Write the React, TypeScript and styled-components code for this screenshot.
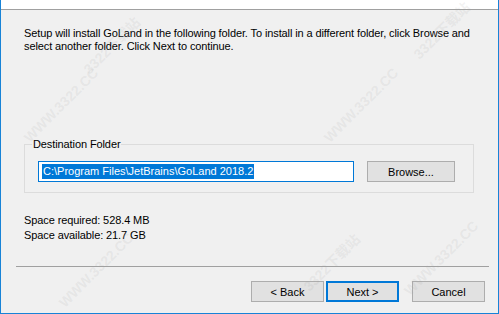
import styled, { createGlobalStyle } from "styled-components";

const GlobalStyle = createGlobalStyle`
  html, body {
    margin: 0;
    padding: 0;
    background: #f0f0f0;
  }
  * {
    box-sizing: border-box;
  }
`;

const Window = styled.div`
  position: relative;
  width: 499px;
  height: 314px;
  display: flex;
  flex-direction: column;
  background: #f0f0f0;
  border-left: 1px solid #1883d7;
  border-right: 1px solid #1883d7;
  border-bottom: 1px solid #1883d7;
  font-family: "Liberation Sans", Arial, sans-serif;
  font-size: 11px;
  color: #000;
  overflow: hidden;
`;

const Header = styled.div`
  height: 10px;
  background: #fff;
  border-bottom: 1px solid #a0a0a0;
`;

const Content = styled.div`
  padding: 0 0 0 23px;
`;

const Intro = styled.p`
  margin: 17px 0 0;
  line-height: 13px;
  letter-spacing: -0.11px;
  white-space: nowrap;
`;

const GroupBox = styled.fieldset`
  width: 450px;
  margin: 85px 0 0;
  padding: 10px 0 10px 0;
  border: 1px solid #dcdcdc;
  min-width: 0;
`;

const Legend = styled.legend`
  margin-left: 7px;
  padding: 0 1px;
  line-height: 13px;
  letter-spacing: -0.1px;
`;

const PathRow = styled.div`
  display: flex;
  align-items: center;
  gap: 13px;
  margin-left: 13px;
`;

const PathField = styled.div`
  width: 316px;
  height: 21px;
  background: #fff;
  border: 1px solid #0078d7;
  padding: 2px 3px;
  display: flex;
  align-items: center;
`;

const Selected = styled.span`
  background: #0078d7;
  color: #fff;
  line-height: 15px;
  padding: 0 1px;
  white-space: nowrap;
`;

const Button = styled.button<{ $focused?: boolean; $width?: number }>`
  width: ${(p) => p.$width ?? 73}px;
  height: 21px;
  padding: 0;
  margin: 0;
  background: #e1e1e1;
  border: ${(p) => (p.$focused ? "2px solid #0078d7" : "1px solid #adadad")};
  font-family: "Liberation Sans", Arial, sans-serif;
  font-size: 11px;
  color: #000;
`;

const SpaceInfo = styled.div`
  margin-top: 21px;
  display: flex;
  flex-direction: column;
  gap: 2px;
  line-height: 13px;
  letter-spacing: -0.1px;
`;

const Footer = styled.div`
  margin-top: auto;
  padding: 0 9px 0 15px;
`;

const Separator = styled.div`
  height: 1px;
  background: #a0a0a0;
`;

const ButtonRow = styled.div`
  display: flex;
  justify-content: flex-end;
  padding: 14px 4px 11px 0;
  gap: 2px;
`;

const CancelGap = styled.div`
  width: 9px;
`;

const Watermark = styled.span<{ $x: number; $y: number }>`
  position: absolute;
  left: ${(p) => p.$x}px;
  top: ${(p) => p.$y}px;
  transform: translate(-50%, -50%) rotate(-45deg);
  font-family: "Liberation Sans", "Noto Sans CJK SC", sans-serif;
  font-weight: bold;
  font-size: 14px;
  color: rgba(160, 160, 160, 0.14);
  white-space: nowrap;
  pointer-events: none;
`;

const marks = [
  { text: "3322下载站", x: 110, y: 45 },
  { text: "WWW.3322.CC", x: 60, y: 105 },
  { text: "3322下载站", x: 440, y: 30 },
  { text: "WWW.3322.CC", x: 360, y: 105 },
  { text: "3322下载站", x: 330, y: 262 },
  { text: "WWW.3322.CC", x: 440, y: 258 },
  { text: "WWW.3322.CC", x: 95, y: 270 },
];

export default function App() {
  return (
    <>
      <GlobalStyle />
      <Window>
        <Header />
        <Content>
          <Intro>
            Setup will install GoLand in the following folder. To install in a
            different folder, click Browse and
            <br />
            select another folder. Click Next to continue.
          </Intro>
          <GroupBox>
            <Legend>Destination Folder</Legend>
            <PathRow>
              <PathField>
                <Selected>C:\Program Files\JetBrains\GoLand 2018.2</Selected>
              </PathField>
              <Button $width={88}>Browse...</Button>
            </PathRow>
          </GroupBox>
          <SpaceInfo>
            <div>Space required: 528.4 MB</div>
            <div>Space available: 21.7 GB</div>
          </SpaceInfo>
        </Content>
        <Footer>
          <Separator />
          <ButtonRow>
            <Button>&lt; Back</Button>
            <Button $focused>Next &gt;</Button>
            <CancelGap />
            <Button>Cancel</Button>
          </ButtonRow>
        </Footer>
        {marks.map((m, i) => (
          <Watermark key={i} $x={m.x} $y={m.y}>
            {m.text}
          </Watermark>
        ))}
      </Window>
    </>
  );
}
